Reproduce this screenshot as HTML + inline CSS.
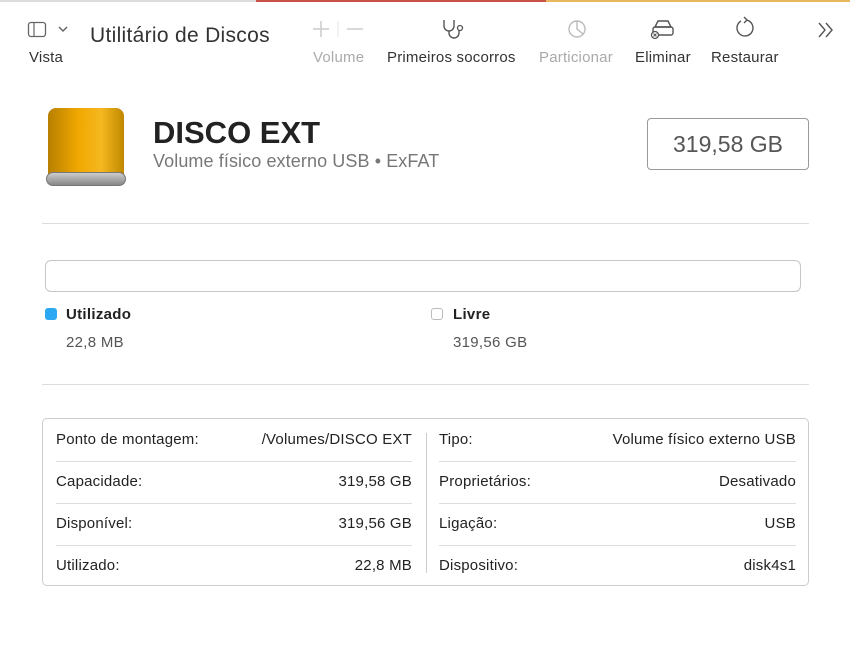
<!DOCTYPE html>
<html><head><meta charset="utf-8"><style>
*{margin:0;padding:0;box-sizing:border-box}
body{width:850px;height:670px;background:#fff;font-family:"Liberation Sans",sans-serif;color:#222;position:relative;overflow:hidden}
.abs{position:absolute}
.tb{font-size:15px;color:#333;letter-spacing:0.2px}
.dis{color:#aaa}
.row{position:absolute;left:0;right:0;height:42px;font-size:15px;color:#222;letter-spacing:0.2px}
.row span{position:absolute;top:12px}
.hr{position:absolute;height:1px;background:#ddd}
</style></head><body>
<div class="abs" style="left:0;top:0;width:256px;height:2px;background:#ddd"></div>
<div class="abs" style="left:256px;top:0;width:290px;height:2px;background:#c9514a"></div>
<div class="abs" style="left:546px;top:0;width:304px;height:2px;background:#e8b860"></div>

<svg class="abs" style="left:27px;top:20px" width="44" height="20" viewBox="0 0 44 20">
<rect x="1.5" y="2.5" width="17" height="14" rx="2.5" fill="none" stroke="#666" stroke-width="1.3"/>
<line x1="7" y1="3" x2="7" y2="16" stroke="#666" stroke-width="1.2"/>
<path d="M32 7l4 4 4-4" fill="none" stroke="#666" stroke-width="1.5"/></svg>
<div class="abs tb" style="left:29px;top:49px">Vista</div>
<div class="abs" style="left:90px;top:24px;font-size:21px;color:#333;letter-spacing:0.3px">Utilitário de Discos</div>

<svg class="abs" style="left:310px;top:18px" width="60" height="22"><path d="M11 3v16M3 11h16" stroke="#ccc" stroke-width="1.5"/><line x1="28" y1="3" x2="28" y2="19" stroke="#e4e4e4"/><path d="M37 11h16" stroke="#ccc" stroke-width="1.5"/></svg>
<div class="abs tb dis" style="left:313px;top:49px">Volume</div>

<svg class="abs" style="left:440px;top:17px" width="28" height="24" viewBox="0 0 28 24"><path d="M4 3v6a5 5 0 0 0 10 0V3M9 14v2a5 5 0 0 0 10 0v-3" fill="none" stroke="#555" stroke-width="1.4"/><circle cx="20" cy="11" r="2.5" fill="none" stroke="#555" stroke-width="1.3"/></svg>
<div class="abs tb" style="left:387px;top:49px">Primeiros socorros</div>

<svg class="abs" style="left:566px;top:18px" width="22" height="22"><circle cx="11" cy="11" r="8" fill="none" stroke="#bbb" stroke-width="1.4"/><path d="M11 3v8l6 5" fill="none" stroke="#bbb" stroke-width="1.4"/></svg>
<div class="abs tb dis" style="left:539px;top:49px">Particionar</div>

<svg class="abs" style="left:649px;top:18px" width="28" height="22"><path d="M6 9l3-6h10l3 6z" fill="none" stroke="#555" stroke-width="1.4"/><rect x="4" y="9" width="20" height="8" rx="2" fill="none" stroke="#555" stroke-width="1.4"/><circle cx="6" cy="17" r="3.5" fill="#fff" stroke="#555" stroke-width="1.3"/><path d="M4.5 15.5l3 3M7.5 15.5l-3 3" stroke="#555"/></svg>
<div class="abs tb" style="left:635px;top:49px">Eliminar</div>

<svg class="abs" style="left:734px;top:16px" width="22" height="24"><path d="M7 5a8 8 0 1 0 5-1" fill="none" stroke="#555" stroke-width="1.4"/><path d="M10 1l3 3-3 3" fill="none" stroke="#555" stroke-width="1.4"/></svg>
<div class="abs tb" style="left:711px;top:49px">Restaurar</div>
<svg class="abs" style="left:816px;top:21px" width="20" height="18"><path d="M3 2l6 7-6 7M10 2l6 7-6 7" fill="none" stroke="#555" stroke-width="1.4"/></svg>

<div class="abs" style="left:48px;top:108px;width:76px;height:76px;border-radius:8px 8px 10px 10px;background:linear-gradient(90deg,#b88000,#f0a800 40%,#f5b820 70%,#c08800)"></div>
<div class="abs" style="left:46px;top:172px;width:80px;height:14px;border-radius:7px;background:linear-gradient(#ccc,#888);border:1px solid #777"></div>

<div class="abs" style="left:153px;top:115px;font-size:31px;font-weight:bold;color:#222">DISCO EXT</div>
<div class="abs" style="left:153px;top:151px;font-size:18px;color:#777;letter-spacing:0.1px">Volume físico externo USB • ExFAT</div>
<div class="abs" style="left:647px;top:118px;width:162px;height:52px;border:1.5px solid #999;border-radius:4px;font-size:23px;color:#555;text-align:center;line-height:51px">319,58 GB</div>

<div class="hr" style="left:42px;width:767px;top:223px"></div>
<div class="abs" style="left:45px;top:260px;width:756px;height:32px;border:1px solid #c6c6c6;border-radius:6px"></div>
<div class="abs" style="left:45px;top:308px;width:12px;height:12px;border-radius:3px;background:#2aa8f2"></div>
<div class="abs" style="left:66px;top:306px;font-size:15px;font-weight:bold;letter-spacing:0.3px">Utilizado</div>
<div class="abs" style="left:66px;top:334px;font-size:15px;color:#555;letter-spacing:0.3px">22,8 MB</div>
<div class="abs" style="left:431px;top:308px;width:12px;height:12px;border-radius:3px;border:1px solid #bbb"></div>
<div class="abs" style="left:453px;top:306px;font-size:15px;font-weight:bold;letter-spacing:0.3px">Livre</div>
<div class="abs" style="left:453px;top:334px;font-size:15px;color:#555;letter-spacing:0.3px">319,56 GB</div>
<div class="hr" style="left:42px;width:767px;top:384px"></div>

<div class="abs" style="left:42px;top:418px;width:767px;height:168px;border:1px solid #ccc;border-radius:5px">
 <div class="abs" style="left:383px;top:14px;width:1px;height:140px;background:#ccc"></div>
 <div class="abs" style="left:0;top:0;width:383px;height:168px">
  <div class="row" style="top:0"><span style="left:13px">Ponto de montagem:</span><span style="right:14px">/Volumes/DISCO EXT</span></div>
  <div class="hr" style="left:13px;right:14px;top:42px"></div>
  <div class="row" style="top:42px"><span style="left:13px">Capacidade:</span><span style="right:14px">319,58 GB</span></div>
  <div class="hr" style="left:13px;right:14px;top:84px"></div>
  <div class="row" style="top:84px"><span style="left:13px">Disponível:</span><span style="right:14px">319,56 GB</span></div>
  <div class="hr" style="left:13px;right:14px;top:126px"></div>
  <div class="row" style="top:126px"><span style="left:13px">Utilizado:</span><span style="right:14px">22,8 MB</span></div>
 </div>
 <div class="abs" style="left:383px;top:0;width:383px;height:168px">
  <div class="row" style="top:0"><span style="left:13px">Tipo:</span><span style="right:13px">Volume físico externo USB</span></div>
  <div class="hr" style="left:13px;right:13px;top:42px"></div>
  <div class="row" style="top:42px"><span style="left:13px">Proprietários:</span><span style="right:13px">Desativado</span></div>
  <div class="hr" style="left:13px;right:13px;top:84px"></div>
  <div class="row" style="top:84px"><span style="left:13px">Ligação:</span><span style="right:13px">USB</span></div>
  <div class="hr" style="left:13px;right:13px;top:126px"></div>
  <div class="row" style="top:126px"><span style="left:13px">Dispositivo:</span><span style="right:13px">disk4s1</span></div>
 </div>
</div>
</body></html>
